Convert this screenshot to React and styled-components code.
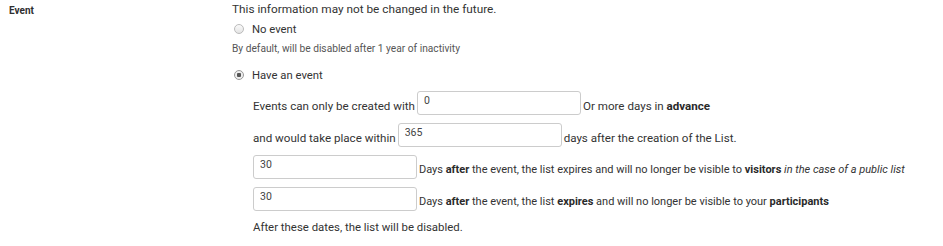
import React from 'react'
import styled, { createGlobalStyle } from 'styled-components'

const GlobalStyle = createGlobalStyle`
  body {
    margin: 0;
    background: #fff;
    font-family: Roboto, "Liberation Sans", sans-serif;
    color: #333;
  }
`

const Section = styled.div`
  display: grid;
  grid-template-columns: 223px 1fr;
  padding-left: 9px;
`

const Label = styled.div`
  font-size: 10px;
  font-weight: 700;
  line-height: 18px;
  padding-top: 2px;
  color: #2f2f2f;
`

const Content = styled.div`
  display: flex;
  flex-direction: column;
`

const Text = styled.div`
  font-size: ${p => p.$small ? '10.2px' : p.$size || '11.8px'};
  line-height: 18px;
  margin-top: ${p => p.$top || 0}px;
  padding-left: ${p => p.$indent || 0}px;
  color: ${p => p.$small ? '#555' : '#333'};
  white-space: nowrap;
`

const RadioRow = styled.label`
  display: flex;
  align-items: center;
  gap: 8px;
  height: 18px;
  margin-top: ${p => p.$top || 0}px;
  padding-left: 2px;
  font-size: 11.3px;
  color: #333;
`

const RadioDot = styled.span`
  width: 8px;
  height: 8px;
  border-radius: 50%;
  border: 1px solid ${p => p.$checked ? '#999' : '#bbb'};
  background: ${p => p.$checked
    ? 'radial-gradient(circle, #555 0 2px, #eee 2.5px)'
    : 'linear-gradient(#fafafa, #e4e4e4)'};
`

const Nested = styled.div`
  display: flex;
  flex-direction: column;
  gap: 8px;
  padding-left: 21px;
  margin-top: 7px;
`

const Row = styled.div`
  display: flex;
  align-items: center;
  gap: 2px;
  height: 24px;
  font-size: 11.6px;
  white-space: nowrap;
  color: #333;
`

const Words = styled.span`
  padding-top: 5px;
  font-size: ${p => p.$size || 'inherit'};
  b { font-weight: 700; color: #2a2a2a; }
  i { font-style: italic; }
`

const Field = styled.input`
  box-sizing: border-box;
  width: 164px;
  height: 24px;
  border: 1px solid #ccc;
  border-radius: 3px;
  padding: 0 6px 5px;
  font-family: inherit;
  font-size: 10.5px;
  color: #444;
  outline: none;
  background: #fff;
`

export default function App() {
  return (
    <>
      <GlobalStyle />
      <Section>
        <Label>Event</Label>
        <Content>
          <Text>This information may not be changed in the future.</Text>
          <RadioRow $top={2}><RadioDot />No event</RadioRow>
          <Text $small $top={2}>By default, will be disabled after 1 year of inactivity</Text>
          <RadioRow $top={8}><RadioDot $checked />Have an event</RadioRow>
          <Nested>
            <Row>
              <Words>Events can only be created with</Words>
              <Field defaultValue="0" />
              <Words>Or more days in <b>advance</b></Words>
            </Row>
            <Row>
              <Words>and would take place within</Words>
              <Field defaultValue="365" />
              <Words>days after the creation of the List.</Words>
            </Row>
            <Row>
              <Field defaultValue="30" />
              <Words $size="11px">Days <b>after</b> the event, the list expires and will no longer be visible to <b>visitors</b> <i>in the case of a public list</i></Words>
            </Row>
            <Row>
              <Field defaultValue="30" />
              <Words $size="11px">Days <b>after</b> the event, the list <b>expires</b> and will no longer be visible to your <b>participants</b></Words>
            </Row>
          </Nested>
          <Text $top={7} $indent={21} $size="11.4px">After these dates, the list will be disabled.</Text>
        </Content>
      </Section>
    </>
  )
}
